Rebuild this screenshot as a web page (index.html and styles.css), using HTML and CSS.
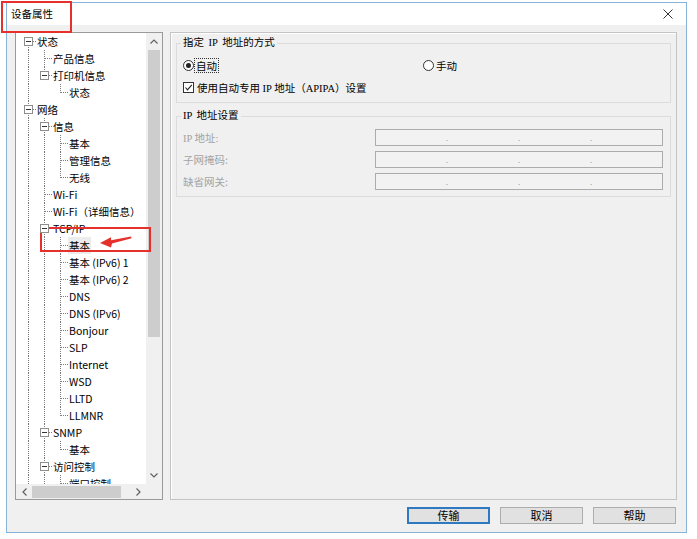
FILE: index.html
```html
<!DOCTYPE html>
<html lang="zh-CN">
<head>
<meta charset="utf-8">
<title>设备属性</title>
<link rel="stylesheet" href="styles.css">
</head>
<body>
<div class="window">
  <div class="titlebar">
    <span class="title">设备属性</span>
    <span class="close"><svg width="10" height="10" viewBox="0 0 10 10"><path d="M0.5 0.5 L9.5 9.5 M9.5 0.5 L0.5 9.5" stroke="#333" stroke-width="1" fill="none"/></svg></span>
  </div>
  <div class="content">
    <div class="main">
      <div class="tree">
        <div class="tree-list">
          <div class="row"><i class="g m mf"><b></b></i><span class="tx">状态</span></div>
          <div class="row"><i class="g v"></i><i class="g t"></i><span class="tx">产品信息</span></div>
          <div class="row"><i class="g v"></i><i class="g m ml"><b></b></i><span class="tx">打印机信息</span></div>
          <div class="row"><i class="g v"></i><i class="g"></i><i class="g l"></i><span class="tx">状态</span></div>
          <div class="row"><i class="g m mt"><b></b></i><span class="tx">网络</span></div>
          <div class="row"><i class="g v"></i><i class="g m mt"><b></b></i><span class="tx">信息</span></div>
          <div class="row"><i class="g v"></i><i class="g v"></i><i class="g t"></i><span class="tx">基本</span></div>
          <div class="row"><i class="g v"></i><i class="g v"></i><i class="g t"></i><span class="tx">管理信息</span></div>
          <div class="row"><i class="g v"></i><i class="g v"></i><i class="g l"></i><span class="tx">无线</span></div>
          <div class="row"><i class="g v"></i><i class="g t"></i><span class="tx">Wi-Fi</span></div>
          <div class="row"><i class="g v"></i><i class="g t"></i><span class="tx">Wi-Fi（详细信息）</span></div>
          <div class="row"><i class="g v"></i><i class="g m mt"><b></b></i><span class="tx">TCP/IP</span></div>
          <div class="row"><i class="g v"></i><i class="g v"></i><i class="g t"></i><span class="tx sel">基本</span></div>
          <div class="row"><i class="g v"></i><i class="g v"></i><i class="g t"></i><span class="tx">基本 (IPv6) 1</span></div>
          <div class="row"><i class="g v"></i><i class="g v"></i><i class="g t"></i><span class="tx">基本 (IPv6) 2</span></div>
          <div class="row"><i class="g v"></i><i class="g v"></i><i class="g t"></i><span class="tx">DNS</span></div>
          <div class="row"><i class="g v"></i><i class="g v"></i><i class="g t"></i><span class="tx">DNS (IPv6)</span></div>
          <div class="row"><i class="g v"></i><i class="g v"></i><i class="g t"></i><span class="tx">Bonjour</span></div>
          <div class="row"><i class="g v"></i><i class="g v"></i><i class="g t"></i><span class="tx">SLP</span></div>
          <div class="row"><i class="g v"></i><i class="g v"></i><i class="g t"></i><span class="tx">Internet</span></div>
          <div class="row"><i class="g v"></i><i class="g v"></i><i class="g t"></i><span class="tx">WSD</span></div>
          <div class="row"><i class="g v"></i><i class="g v"></i><i class="g t"></i><span class="tx">LLTD</span></div>
          <div class="row"><i class="g v"></i><i class="g v"></i><i class="g l"></i><span class="tx">LLMNR</span></div>
          <div class="row"><i class="g v"></i><i class="g m mt"><b></b></i><span class="tx">SNMP</span></div>
          <div class="row"><i class="g v"></i><i class="g v"></i><i class="g l"></i><span class="tx">基本</span></div>
          <div class="row"><i class="g v"></i><i class="g m mt"><b></b></i><span class="tx">访问控制</span></div>
          <div class="row"><i class="g v"></i><i class="g v"></i><i class="g t"></i><span class="tx">端口控制</span></div>
        </div>
        <div class="vscroll">
          <div class="sb-btn"><svg width="8" height="5" viewBox="0 0 8 5"><path d="M0.5 4.5 L4 1 L7.5 4.5" stroke="#606060" stroke-width="1.2" fill="none"/></svg></div>
          <div class="vtrack"><div class="vthumb"></div></div>
          <div class="sb-btn"><svg width="8" height="5" viewBox="0 0 8 5"><path d="M0.5 0.5 L4 4 L7.5 0.5" stroke="#606060" stroke-width="1.2" fill="none"/></svg></div>
        </div>
        <div class="hscroll">
          <div class="sb-hbtn"><svg width="5" height="8" viewBox="0 0 5 8"><path d="M4.5 0.5 L1 4 L4.5 7.5" stroke="#606060" stroke-width="1.2" fill="none"/></svg></div>
          <div class="htrack"><div class="hthumb"></div></div>
          <div class="sb-hbtn"><svg width="5" height="8" viewBox="0 0 5 8"><path d="M0.5 0.5 L4 4 L0.5 7.5" stroke="#606060" stroke-width="1.2" fill="none"/></svg></div>
        </div>
        <div class="corner"></div>
      </div>
      <div class="panel">
        <fieldset class="group g1">
          <legend>指定 IP 地址的方式</legend>
          <div class="radios">
            <label class="opt"><span class="radio on"></span><span class="focus">自动</span></label>
            <label class="opt"><span class="radio"></span><span class="otx">手动</span></label>
          </div>
          <label class="opt check"><span class="checkbox"><svg width="9" height="9" viewBox="0 0 9 9"><path d="M1.5 4.5 L3.5 6.8 L7.8 1.8" stroke="#222" stroke-width="1.1" fill="none"/></svg></span><span class="ser">使用自动专用 IP 地址（APIPA）设置</span></label>
        </fieldset>
        <fieldset class="group g2">
          <legend>IP 地址设置</legend>
          <div class="fields">
            <span class="lbl ser">IP 地址:</span>
            <div class="ipbox"><span class="seg"></span><span class="dot">.</span><span class="seg"></span><span class="dot">.</span><span class="seg"></span><span class="dot">.</span><span class="seg"></span></div>
            <span class="lbl">子网掩码:</span>
            <div class="ipbox"><span class="seg"></span><span class="dot">.</span><span class="seg"></span><span class="dot">.</span><span class="seg"></span><span class="dot">.</span><span class="seg"></span></div>
            <span class="lbl">缺省网关:</span>
            <div class="ipbox"><span class="seg"></span><span class="dot">.</span><span class="seg"></span><span class="dot">.</span><span class="seg"></span><span class="dot">.</span><span class="seg"></span></div>
          </div>
        </fieldset>
      </div>
    </div>
    <div class="buttons">
      <button class="btn default">传输</button>
      <button class="btn">取消</button>
      <button class="btn">帮助</button>
    </div>
  </div>
</div>
<div class="mark mark-title"></div>
<div class="mark mark-item"></div>
<svg class="arrow" width="40" height="18" viewBox="0 0 40 18"><polygon points="4,11 15,5.3 15,8.2 35,4.6 35.6,6.2 16,11.6 15,15.6" fill="#e5302b"/></svg>
</body>
</html>
```

FILE: styles.css
```css
* { box-sizing: border-box; }
html, body { margin: 0; }
body {
  position: relative;
  width: 697px;
  height: 539px;
  overflow: hidden;
  padding: 2px 0 0 6px;
  background: #fff;
  font-family: "Noto Sans CJK SC", sans-serif;
  font-size: 10.5px;
  color: #000;
}

.window {
  width: 681px;
  height: 531px;
  border: 1px solid #86b3da;
  background: #f0f0f0;
  display: flex;
  flex-direction: column;
}

.titlebar {
  flex: none;
  height: 22px;
  background: #fff;
  display: flex;
  align-items: center;
  justify-content: space-between;
  padding: 0 13px 0 4px;
}
.title { line-height: 14px; }
.close { display: flex; }

.content {
  flex: 1;
  display: flex;
  flex-direction: column;
  padding: 7px 9px 8px 8px;
}
.main {
  height: 468px;
  display: flex;
  gap: 7px;
}

/* tree */
.tree {
  width: 148px;
  flex: none;
  border: 1px solid #9a9a9a;
  background: #fff;
  display: grid;
  grid-template-columns: 130px 16px;
  grid-template-rows: 451px 15px;
}
.tree-list {
  overflow: hidden;
  padding-left: 4px;
}
.row {
  display: flex;
  height: 17px;
  white-space: nowrap;
}
.tx {
  line-height: 17px;
  padding: 0 1px;
}
.tx.sel { background: #ececec; }
.g {
  width: 16px;
  flex: none;
  position: relative;
}
.v::before, .t::before, .l::before,
.mt::before, .mf::before, .ml::before {
  content: "";
  position: absolute;
  left: 8px;
  border-left: 1px dotted #7c7c7c;
}
.v::before, .t::before, .mt::before { top: 0; bottom: 0; }
.l::before, .ml::before { top: 0; height: 9px; }
.mf::before { top: 8px; bottom: 0; }
.t::after, .l::after, .m::after {
  content: "";
  position: absolute;
  left: 9px;
  right: 0;
  top: 8px;
  border-top: 1px dotted #7c7c7c;
}
.m b {
  position: absolute;
  left: 4px;
  top: 4px;
  width: 9px;
  height: 9px;
  border: 1px solid #8e8e8e;
  background: #fff;
  z-index: 1;
}
.m b::after {
  content: "";
  position: absolute;
  left: 1px;
  top: 3px;
  width: 5px;
  border-top: 1px solid #333;
}

.vscroll {
  background: #f0f0f0;
  display: flex;
  flex-direction: column;
}
.sb-btn {
  flex: none;
  height: 17px;
  display: flex;
  align-items: center;
  justify-content: center;
}
.vtrack { flex: 1; padding: 0 2px; }
.vthumb { height: 287px; background: #cdcdcd; }

.hscroll {
  background: #f0f0f0;
  display: flex;
}
.sb-hbtn {
  flex: none;
  width: 16px;
  display: flex;
  align-items: center;
  justify-content: center;
}
.htrack { flex: 1; padding: 2px 0 1px; }
.hthumb { width: 89px; height: 100%; background: #cdcdcd; }
.corner { background: #f0f0f0; }

/* right panel */
.panel {
  flex: 1;
  border: 1px solid #c4c4c4;
  box-shadow: inset 1px 1px 0 #fff;
  padding: 3px 5px 0 5px;
}
.group {
  margin: 0;
  min-width: 0;
  border: 1px solid #dcdcdc;
  padding: 0 6px 7px 6px;
}
.group legend {
  padding: 0 2px;
  margin-left: -2px;
  line-height: 14px;
  font-family: "Liberation Serif", "Noto Sans CJK SC", serif;
  word-spacing: 2px;
}
.ser { font-family: "Liberation Serif", "Noto Sans CJK SC", serif; }

.radios {
  margin-top: 7px;
  height: 16px;
  display: grid;
  grid-template-columns: 240px auto;
  align-items: center;
}
.opt {
  display: flex;
  align-items: center;
}
.radio {
  position: relative;
  width: 11px;
  height: 11px;
  border: 1px solid #333;
  border-radius: 50%;
  background: #fff;
  margin-right: 1px;
  flex: none;
}
.radio.on::after {
  content: "";
  position: absolute;
  left: 2px;
  top: 2px;
  width: 5px;
  height: 5px;
  border-radius: 50%;
  background: #222;
}
.focus {
  outline: 1px dotted #333;
  padding: 0 1px;
  line-height: 13px;
}
.otx { padding-left: 1px; }
.check {
  margin-top: 6px;
  height: 16px;
}
.checkbox {
  width: 11px;
  height: 11px;
  border: 1px solid #333;
  background: #fff;
  margin-right: 3px;
  display: flex;
  align-items: center;
  justify-content: center;
  flex: none;
}

.g2 {
  margin-top: 6px;
  padding-bottom: 6px;
}
.fields {
  margin-top: 6px;
  display: grid;
  grid-template-columns: 192px 288px;
  grid-auto-rows: 17px;
  row-gap: 5px;
  align-items: center;
}
.lbl { color: #a3a3a3; }
.ipbox {
  height: 17px;
  border: 1px solid #acacac;
  background: #f2f2f2;
  display: flex;
  align-items: center;
}
.seg { flex: 1; }
.dot {
  color: #9a9a9a;
  font-size: 8px;
  line-height: 8px;
}

/* buttons */
.buttons {
  margin-top: 7px;
  display: flex;
  justify-content: flex-end;
  gap: 10px;
  padding-right: 1px;
}
.btn {
  width: 83px;
  height: 17px;
  margin: 0;
  padding: 0;
  background: #e1e1e1;
  border: 1px solid #adadad;
  font-family: "Noto Sans CJK SC", sans-serif;
  font-size: 11px;
  line-height: 1;
  color: #000;
  display: flex;
  align-items: center;
  justify-content: center;
}
.btn.default {
  border: 1px solid #2f79c0;
  box-shadow: inset 0 0 0 1px #2f79c0;
}

/* annotations */
.mark {
  position: absolute;
  border: 2px solid #e5302b;
}
.mark-title { left: 1px; top: 1px; width: 71px; height: 32px; }
.mark-item { left: 40px; top: 227px; width: 111px; height: 25px; }
.arrow { position: absolute; left: 96px; top: 232px; }
```
